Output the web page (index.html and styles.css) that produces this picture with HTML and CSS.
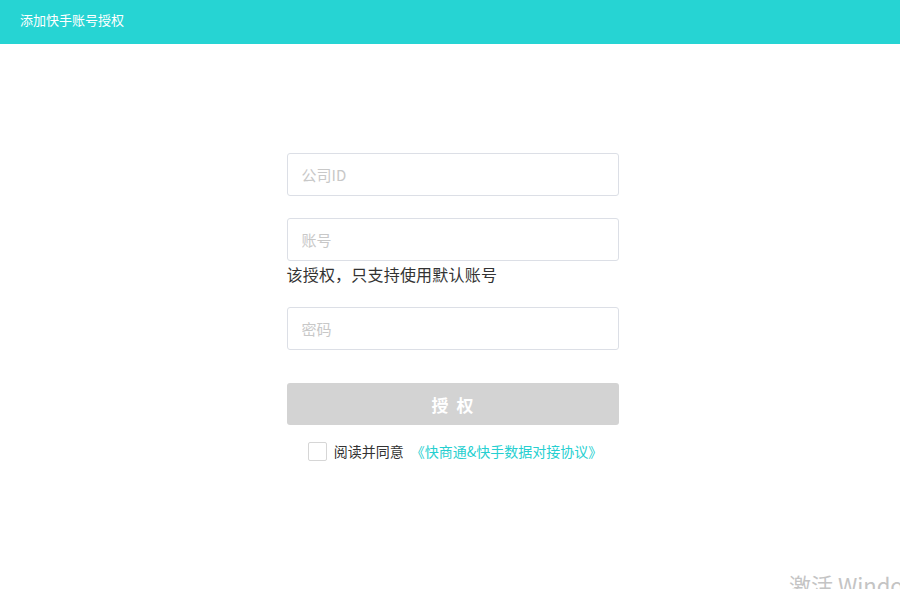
FILE: index.html
```html
<!DOCTYPE html>
<html lang="zh-CN">
<head>
<meta charset="utf-8">
<title>添加快手账号授权</title>
<link rel="stylesheet" href="styles.css">
</head>
<body>
<header class="topbar">添加快手账号授权</header>
<main class="main">
  <form class="form">
    <div class="field"><input class="input" type="text" placeholder="公司ID"></div>
    <div class="field field-note">
      <input class="input" type="text" placeholder="账号">
      <div class="note">该授权，只支持使用默认账号</div>
    </div>
    <div class="field"><input class="input" type="password" placeholder="密码"></div>
    <button type="button" class="btn">授权</button>
    <label class="agree">
      <span class="check"></span>
      <span class="agree-text">阅读并同意</span>
      <a class="link">《快商通&amp;快手数据对接协议》</a>
    </label>
  </form>
</main>
<div class="watermark">激活 Windows</div>
</body>
</html>
```
FILE: styles.css
```css
* { box-sizing: border-box; }
html, body { margin: 0; padding: 0; }
body {
  width: 900px;
  height: 589px;
  overflow: hidden;
  background: #fff;
  font-family: "Noto Sans CJK SC", "Noto Sans", sans-serif;
  color: #333;
  position: relative;
}
.topbar {
  height: 44px;
  background: #26d4d3;
  color: #fff;
  font-size: 13px;
  line-height: 39px;
  padding-left: 20px;
}
.main {
  display: flex;
  justify-content: center;
  padding-top: 109px;
  padding-left: 5px;
}
.form {
  width: 332px;
  display: flex;
  flex-direction: column;
}
.field { margin-bottom: 22px; }
.field-note { margin-bottom: 21px; }
.input {
  display: block;
  width: 100%;
  height: 43px;
  border: 1px solid #dcdfe6;
  border-radius: 3px;
  padding: 0 14px;
  font-family: inherit;
  font-size: 15px;
  color: #333;
  outline: none;
}
.input::placeholder { color: #c8c8c8; }
.note {
  font-size: 16px;
  line-height: 24px;
  margin-top: 1px;
  color: #333;
  letter-spacing: 0.2px;
}
.btn {
  margin-top: 11px;
  height: 42px;
  border: none;
  border-radius: 3px;
  background: #d3d3d3;
  color: #fff;
  font-family: inherit;
  font-size: 17px;
  font-weight: bold;
  letter-spacing: 8px;
  text-indent: 8px;
}
.agree {
  display: flex;
  align-items: center;
  justify-content: center;
  margin-top: 16px;
  padding-left: 5px;
  font-size: 14px;
}
.check {
  width: 19px;
  height: 19px;
  border: 1px solid #d6d6d6;
  border-radius: 2px;
  margin-right: 7px;
}
.agree-text { color: #333; margin-right: 7px; }
.link { color: #26cfd0; }
.watermark {
  position: absolute;
  left: 789px;
  top: 568px;
  font-size: 22px;
  color: #c4c4c4;
  white-space: nowrap;
  font-family: "Noto Sans CJK SC", "Open Sans", sans-serif;
}
```
